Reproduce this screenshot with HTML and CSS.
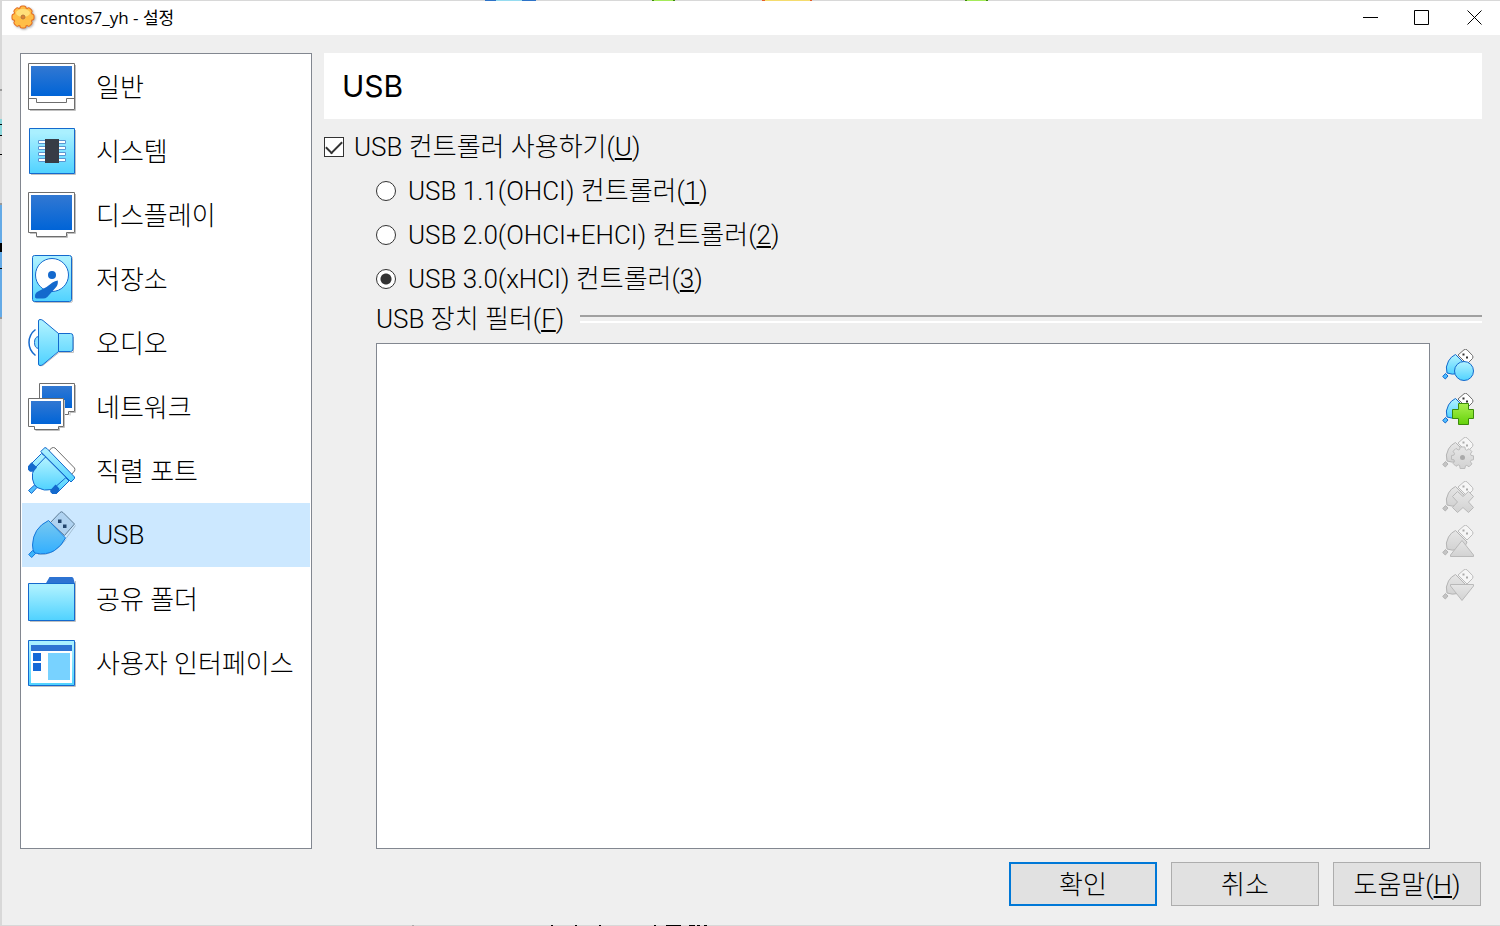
FILE: index.html
```html
<!DOCTYPE html>
<html lang="ko">
<head>
<meta charset="utf-8">
<title>centos7_yh - 설정</title>
<link rel="stylesheet" href="styles.css">
</head>
<body>
<svg class="defs" width="0" height="0" aria-hidden="true">
  <defs>
    <linearGradient id="sky" x1="0" y1="0" x2="0" y2="1"><stop offset="0.1" stop-color="#aaf0ff"/><stop offset="1" stop-color="#50d2ff"/></linearGradient>
    <linearGradient id="deep" x1="0" y1="0" x2="0" y2="1"><stop offset="0" stop-color="#3278d2"/><stop offset="1" stop-color="#0064d7"/></linearGradient>
    <linearGradient id="picked" x1="0" y1="0" x2="0" y2="1"><stop offset="0" stop-color="#78c8f0"/><stop offset="1" stop-color="#32afff"/></linearGradient>
    <linearGradient id="green" x1="0" y1="0" x2="0" y2="1"><stop offset="0" stop-color="#aaf050"/><stop offset="1" stop-color="#64d20a"/></linearGradient>
    <linearGradient id="gray" x1="0" y1="0" x2="0" y2="1"><stop offset="0" stop-color="#e6e6e6"/><stop offset="1" stop-color="#d2d2d2"/></linearGradient>
    <symbol id="plug" viewBox="0 0 32 32">
      <path d="M16 6 22 .8q1.500-1 3 0l5.500 5.700q1 1.500 0 3L25 15z" fill="#fff" stroke="#6e6e6e"/>
      <path d="M20.500 4.500h2v2h-2zM24 7.500h2v2h-2z" fill="#333"/>
      <path d="M13.500 5.500 25 17q-2 6-9 7.500-6 1.500-11-.5Q3 18 6.500 12 9 7.500 13.500 5.500z" fill="url(#sky)" stroke="#1469cd"/>
      <path d="M.7 27.500 3.500 24.500 6 27 3.300 30z" fill="#50beff" stroke="#1469cd"/>
    </symbol>
    <symbol id="plug-off" viewBox="0 0 32 32">
      <path d="M16 6 22 .8q1.500-1 3 0l5.500 5.700q1 1.500 0 3L25 15z" fill="#f6f6f6" stroke="#bcbcbc"/>
      <path d="M20.500 4.500h2v2h-2zM24 7.500h2v2h-2z" fill="#aaa"/>
      <path d="M13.500 5.500 25 17q-2 6-9 7.500-6 1.500-11-.5Q3 18 6.500 12 9 7.500 13.500 5.500z" fill="url(#gray)" stroke="#b4b4b4"/>
      <path d="M.7 27.500 3.500 24.500 6 27 3.300 30z" fill="#c4c4c4" stroke="#b4b4b4"/>
    </symbol>
    <symbol id="gear" viewBox="0 0 24 24">
      <path d="M9.500 1h5l.5 2.700 1.500.7 2.300-1.600 3 3-1.500 2.500.6 1.500 2.600.5v4l-2.600.6-.6 1.500 1.500 2.300-3 3-2.300-1.500-1.500.6-.5 2.700h-5L9 20.400l-1.500-.7-2.300 1.500-3-3 1.500-2.300-.6-1.500L.5 14v-4l2.600-.5.6-1.500-1.500-2.500 3-3 2.300 1.600L9 3.700z"/>
    </symbol>
    <g id="cog">
      <circle cx="12" cy="12" r="9"/>
      <rect x="9.500" y="1.500" width="5" height="21" rx="1.500"/>
      <rect x="9.500" y="1.500" width="5" height="21" rx="1.500" transform="rotate(45 12 12)"/>
      <rect x="9.500" y="1.500" width="5" height="21" rx="1.500" transform="rotate(90 12 12)"/>
      <rect x="9.500" y="1.500" width="5" height="21" rx="1.500" transform="rotate(135 12 12)"/>
    </g>
  </defs>
</svg>

<div class="window">
  <header class="titlebar">
    <svg class="app-icon" viewBox="0 0 24 24" aria-hidden="true">
      <use href="#cog" fill="#e66e20" stroke="#e66e20" stroke-width="2"/>
      <use href="#cog" fill="#ffbe46"/>
      <ellipse cx="12" cy="8" rx="7" ry="4" fill="#ffe07a"/>
      <circle cx="12" cy="12" r="2" fill="#dc8232" stroke="#b4783c"/>
    </svg>
    <h1 class="caption">centos7_yh - 설정</h1>
    <div class="window-controls">
      <button type="button" aria-label="최소화"><svg viewBox="0 0 16 16"><path d="M0 8.500h15"/></svg></button>
      <button type="button" aria-label="최대화"><svg viewBox="0 0 16 16"><path d="M-.5 1.500h14v14h-14z"/></svg></button>
      <button type="button" aria-label="닫기"><svg viewBox="0 0 16 16"><path d="M.5 1.500l14 14M14.500 1.500l-14 14"/></svg></button>
    </div>
  </header>

  <div class="content">
    <nav class="categories" aria-label="설정">
      <a href="#general"><svg viewBox="0 0 48 48"><path d="M2 47.500h45.500V2" stroke="#c0c0c0"/><path d="M.5.5h46v46H.5z" fill="#fff" stroke="#6e6e6e"/><path d="M3 3h41v30H3z" fill="url(#deep)"/><path d="M.5 35.500h8v4h30v-4h8" stroke="#6e6e6e"/></svg><span>일반</span></a>
      <a href="#system"><svg viewBox="0 0 48 48"><path d="M3 47.500h44.500V3" stroke="#c0c0c0"/><path d="M1.500 1.500h45v45h-45z" fill="url(#sky)" stroke="#1469cd"/><path d="M10.500 13.500h27v3h-27zM10.500 19.500h27v3h-27zM10.500 25.500h27v3h-27zM10.500 31.500h27v3h-27z" fill="#fff" stroke="#5a96d2"/><path d="M17 12h14v24H17z" fill="#373c46"/></svg><span>시스템</span></a>
      <a href="#display"><svg viewBox="0 0 48 48"><path d="M2 42.500h7v4h30.500v-4h8V3" stroke="#c0c0c0"/><path d="M.5 1.500h46v40h-8v4h-30v-4h-8z" fill="#fff" stroke="#6e6e6e"/><path d="M3 4h41v35H3z" fill="url(#deep)"/></svg><span>디스플레이</span></a>
      <a href="#storage"><svg viewBox="0 0 48 48"><rect x="5.500" y="1.500" width="39" height="46" rx="2" stroke="#c0c0c0"/><rect x="4.500" y=".5" width="39" height="46" rx="2" fill="url(#sky)" stroke="#1469cd"/><circle cx="24" cy="20" r="16.500" fill="#fff" stroke="#1469cd"/><circle cx="24" cy="20" r="4" fill="#1469cd"/><path d="M29.800 25.500q.5 5-2.500 7.500l-4 4.500-4 4.500q-2 1.500-4 1.500H8.500q-2-.5-1.500-2.500 0-3 3-4.500l8.500-4.500 6-4.500q2.500-1.500 5.300-2z" fill="#1469cd"/></svg><span>저장소</span></a>
      <a href="#audio"><svg viewBox="0 0 48 48"><path d="M12 46.800q3 .5 5-2L31 33.500h14.500V18" stroke="#c0c0c0"/><path d="M7.500 10.500q-6.500 5-6.500 13t6.500 13" stroke="#1469cd" stroke-width="1.500"/><path d="M10.500 17.500q-4 .5-4 6t4 6z" fill="#8ce1ff" stroke="#1469cd"/><path d="M10.500 2q0-1.500 1.500-1.500 2 0 3 1l15.500 13v18L15 45.500q-1 1-3 1-1.500 0-1.500-1.500zM30.500 14.500h12q2.500 0 2.500 2.500v13q0 2.500-2.500 2.500h-12z" fill="url(#sky)" stroke="#1469cd"/></svg><span>오디오</span></a>
      <a href="#network"><svg viewBox="0 0 48 48"><path d="M42 32.500v-3h5.500V2" stroke="#c0c0c0"/><path d="M11.500.5h35v28h-6v3h-23v-3h-6z" fill="#fff" stroke="#6e6e6e"/><path d="M14 3h30v22H14z" fill="url(#deep)"/><path d="M7.500 47.500h24v-3h5V17" stroke="#c0c0c0"/><path d="M.5 15.500h35v28h-5v3h-24v-3h-6z" fill="#fff" stroke="#6e6e6e"/><path d="M3 18h30v23H3z" fill="url(#deep)"/></svg><span>네트워크</span></a>
      <a href="#serial"><svg viewBox="0 0 48 48"><path d="M21 4l2.500-3q2-1 3.500 0L46.500 21q.8 1.500 0 3L43 28z" fill="#fff" stroke="#6e6e6e"/><path d="M13.500 6.500 2 18l4 4 12-12zM37 30 25 42l4 4 12-12z" fill="url(#sky)" stroke="#1469cd"/><path d="M0 19.500 3.500 15.500 9.500 21 5.500 24.500H2L0 22.500zM22.500 43l5-5.500 4 4.500-3 5h-4l-2-2z" fill="#1469cd"/><path d="M17.500 10 6.500 21.500Q3.500 26 4.500 32q1 6 4.500 8.500 7 4 15.500 2L38 30.500z" fill="url(#sky)" stroke="#1469cd"/><path d="M0 19.500 3.500 15.500 9 20.500 5.500 24.500H2L0 22.500zM22.500 43l5-5.500 4 4.500-3 5h-4l-2-2z" fill="#1469cd"/><path d="M12.700 4.500 17 .5l2 1 27.500 28.500v1.500L43 35z" fill="url(#sky)" stroke="#1469cd"/><path d="M.5 43.500 6.500 38l2.500 2.500-5.500 6z" fill="#50beff" stroke="#1469cd"/></svg><span>직렬 포트</span></a>
      <a href="#usb" class="current" aria-current="page"><svg viewBox="0 0 48 48"><path d="M38 27.500 47.500 14.500M10 43.500q15 2 28-15" stroke="#a5bed2"/><path d="M22.500 11.500 32 1.500q1.500-1.500 3 0L46.500 13 36.500 24.500z" fill="#afd2f0" stroke="#5f7d96"/><path d="M30 8.500h3.500V12H30zM35 13.500h3.500V17H35z" fill="#23466e"/><path d="M20.500 9.500 37.500 27q-4 8-11 12.500-8 5-20 2.500-2-3-2-8Q5 17 20.500 9.500z" fill="url(#picked)" stroke="#1478dc"/><path d="M.7 43.500 4.500 39.500 7.500 42.500 3.700 46.500z" fill="#3cb4fa" stroke="#1478dc"/></svg><span>USB</span></a>
      <a href="#folders"><svg viewBox="0 0 48 48"><path d="M2 46.500h45.500V6" stroke="#c0c0c0"/><path d="M17.500 9 21.500 2H44q1 0 1.500 1.500L47 9z" fill="#2d73d2"/><path d="M.5 8.500h46v37H.5z" fill="url(#sky)" stroke="#1469cd"/></svg><span>공유 폴더</span></a>
      <a href="#interface"><svg viewBox="0 0 48 48"><path d="M2 47.500h45.500V3" stroke="#c0c0c0"/><path d="M.5 1.500h46v45H.5z" fill="url(#sky)" stroke="#1469cd"/><path d="M3 6h41v38H3z" fill="#fff"/><path d="M3 6h41v6H3z" fill="#2d73d2"/><path d="M5 14h8v8H5zM5 24h8v8H5z" fill="#1469d7"/><path d="M20 14h22v27H20z" fill="#78d2ff"/></svg><span>사용자 인터페이스</span></a>
    </nav>

    <main class="page">
      <h2 class="page-title">USB</h2>
      <label class="option"><input type="checkbox" checked><span>USB 컨트롤러 사용하기(<u>U</u>)</span></label>
      <div class="details">
        <label class="option"><input type="radio" name="controller"><span>USB 1.1(OHCI) 컨트롤러(<u>1</u>)</span></label>
        <label class="option"><input type="radio" name="controller"><span>USB 2.0(OHCI+EHCI) 컨트롤러(<u>2</u>)</span></label>
        <label class="option"><input type="radio" name="controller" checked><span>USB 3.0(xHCI) 컨트롤러(<u>3</u>)</span></label>
        <h3 class="group-title" id="filters-label"><span>USB 장치 필터(<u>F</u>)</span></h3>
        <div class="filters">
          <div class="filter-list" role="listbox" tabindex="0" aria-labelledby="filters-label"></div>
          <div class="tools">
            <button type="button" aria-label="새 필터 추가"><svg viewBox="0 0 32 32"><use href="#plug"/><circle cx="22" cy="22" r="9.500" fill="url(#sky)" stroke="#1469cd"/></svg></button>
            <button type="button" aria-label="장치에서 필터 추가"><svg viewBox="0 0 32 32"><use href="#plug"/><path d="M16.500 10.500h10v6h5v9h-5v6h-10v-6h-6v-9h6z" fill="url(#green)" stroke="#3c8c0a"/></svg></button>
            <button type="button" disabled aria-label="필터 편집"><svg viewBox="0 0 32 32"><use href="#plug-off"/><use href="#gear" x="9" y="9" width="23" height="23" fill="url(#gray)" stroke="#b9b9b9"/><circle cx="20.500" cy="20.500" r="2.500" fill="#aaa"/></svg></button>
            <button type="button" disabled aria-label="필터 삭제"><svg viewBox="0 0 32 32"><use href="#plug-off"/><path d="M15.500 10.500 21 15.500 26.500 10.500 31.500 15.500 26.500 21 31.500 26.500 26.500 31.500 21 26.500 15.500 31.500 10.500 26.500 15.500 21 10.500 15.500z" fill="url(#gray)" stroke="#b9b9b9"/></svg></button>
            <button type="button" disabled aria-label="위로 이동"><svg viewBox="0 0 32 32"><use href="#plug-off"/><path d="M20 15.500 31.500 30v1.500h-23V30z" fill="url(#gray)" stroke="#b9b9b9"/></svg></button>
            <button type="button" disabled aria-label="아래로 이동"><svg viewBox="0 0 32 32"><use href="#plug-off"/><path d="M20 31.500 31.500 17v-1.500h-23V17z" fill="url(#gray)" stroke="#b9b9b9"/></svg></button>
          </div>
        </div>
      </div>
    </main>
  </div>

  <footer class="actions">
    <button type="button" class="default">확인</button>
    <button type="button">취소</button>
    <button type="button">도움말(<u>H</u>)</button>
  </footer>
</div>
</body>
</html>
```
FILE: styles.css
```css
* {
  box-sizing: border-box;
}

body {
  margin: 0;
  min-height: 100vh;
  display: flex;
  padding: 1px 0 1px 2px;
  color: #000;
  font: 300 26px/32px Roboto, "Noto Sans CJK KR", sans-serif;
  background:
    linear-gradient(90deg, transparent 485px, #2d73c8 485px 496px, #96dcf0 496px 522px, #2d73c8 522px 536px, transparent 536px 652px, #3c8c0a 652px 654px, #a5eb5a 654px 673px, #3c8c0a 673px 675px, transparent 675px 762px, #e65f28 762px 765px, #f5dc6e 765px 810px, #e65f28 810px 812px, transparent 812px 965px, #3c8c0a 965px 967px, #a5eb5a 967px 986px, #3c8c0a 986px 988px, transparent 988px) 0 0 / 100% 1px no-repeat,
    linear-gradient(90deg, transparent 412px, #aaa 412px 414px, transparent 414px 551px, #000 551px 553px, transparent 553px 575px, #000 575px 577px, transparent 577px 599px, #000 599px 601px, transparent 601px 654px, #000 654px 656px, transparent 656px 666px, #000 666px 681px, transparent 681px 689px, #000 689px 695px, transparent 695px 697px, #000 697px 700px, transparent 700px 704px, #000 704px 707px, transparent 707px) 0 100% / 100% 1px no-repeat,
    linear-gradient(transparent 89px, #999 89px 91px, transparent 91px 119px, #8cd7dc 119px 124px, #000 124px 125px, #8cd7dc 125px 135px, #000 135px 136px, transparent 136px 154px, #000 154px 155px, transparent 155px 203px, #999 203px 205px, #64aae6 205px 243px, #000 243px 252px, #64aae6 252px 268px, #000 268px 269px, #64aae6 269px 317px, #999 317px 319px, transparent 319px) 0 0 / 2px 100% no-repeat,
    #d8d8d8;
}

.defs {
  position: absolute;
}

u {
  text-decoration-thickness: 2px;
  text-underline-offset: 2px;
}

button {
  font: inherit;
  color: inherit;
}

.window {
  flex: 1;
  display: flex;
  flex-direction: column;
  background: #efefef;
}

.titlebar {
  display: flex;
  align-items: center;
  height: 34px;
  padding-left: 9px;
  background: #fff;
}

.app-icon {
  width: 24px;
  height: 24px;
  margin: 0 5px 2px 0;
  filter: drop-shadow(1px 1px 1px #aaa);
}

.caption {
  flex: 1;
  margin: 0;
  font: 400 17px/24px "Open Sans", "Noto Sans CJK KR", sans-serif;
}

.window-controls {
  display: flex;
}

.window-controls button {
  width: 52px;
  height: 32px;
  padding: 0 0 2px 2px;
  border: 0;
  background: none;
}

.window-controls svg {
  display: block;
  width: 16px;
  height: 16px;
  margin: 0 auto;
  overflow: visible;
  fill: none;
  stroke: #000;
}

.content {
  flex: 1;
  display: flex;
  gap: 12px;
  padding: 18px 18px 13px;
}

.categories {
  flex: none;
  width: 292px;
  padding: 1px;
  border: 1px solid #828790;
  background: #fff;
}

.categories a {
  display: flex;
  align-items: center;
  gap: 20px;
  height: 64px;
  padding-left: 6px;
  color: inherit;
  text-decoration: none;
  white-space: nowrap;
}

.categories span {
  padding-top: 2px;
}

.categories .current {
  background: #cce8ff;
}

.categories .current span {
  padding-top: 0;
}

.categories svg {
  flex: none;
  width: 48px;
  height: 48px;
  fill: none;
}

.page {
  flex: 1;
  display: flex;
  flex-direction: column;
}

.page-title {
  margin: 0 0 6px;
  padding: 17px 18px;
  font: 400 30px/32px Inter, "Noto Sans CJK KR", sans-serif;
  background: #fff;
}

.option {
  display: flex;
  align-items: center;
  gap: 10px;
  height: 44px;
}

.option input {
  appearance: none;
  flex: none;
  width: 20px;
  height: 20px;
  margin: 0;
  border: 1px solid #333;
  background: #fff;
}

.option input[type="checkbox"]:checked {
  display: grid;
  place-items: center;
}

.option input[type="checkbox"]:checked::before {
  content: "";
  width: 14px;
  height: 7px;
  border: solid #333;
  border-width: 0 0 2px 2px;
  transform: translateY(-2px) rotate(-45deg);
}

.option input[type="radio"] {
  border-radius: 50%;
}

.option input[type="radio"]:checked {
  background: radial-gradient(circle, #333 5px, #fff 6px);
}

.details {
  flex: 1;
  display: flex;
  flex-direction: column;
  padding-left: 52px;
}

.details .option {
  gap: 12px;
}

.group-title {
  display: flex;
  align-items: center;
  gap: 16px;
  height: 36px;
  margin: 0 0 6px;
  font: inherit;
}

.group-title::after {
  content: "";
  flex: 1;
  height: 4px;
  border-top: 2px solid #a0a0a0;
  border-bottom: 2px solid #fff;
}

.filters {
  flex: 1;
  display: flex;
  gap: 12px;
}

.filter-list {
  flex: 1;
  border: 1px solid #828790;
  background: #fff;
}

.tools {
  width: 40px;
}

.tools button {
  display: block;
  height: 44px;
  padding: 0;
  border: 0;
  background: none;
}

.tools svg {
  display: block;
  width: 32px;
  height: 32px;
  overflow: visible;
}

.actions {
  display: flex;
  justify-content: flex-end;
  gap: 14px;
  padding: 0 19px 19px;
}

.actions button {
  width: 148px;
  height: 44px;
  padding: 2px 0 0;
  border: 1px solid #adadad;
  background: #e1e1e1;
}

.actions .default {
  border: 2px solid #0078d7;
}
```
